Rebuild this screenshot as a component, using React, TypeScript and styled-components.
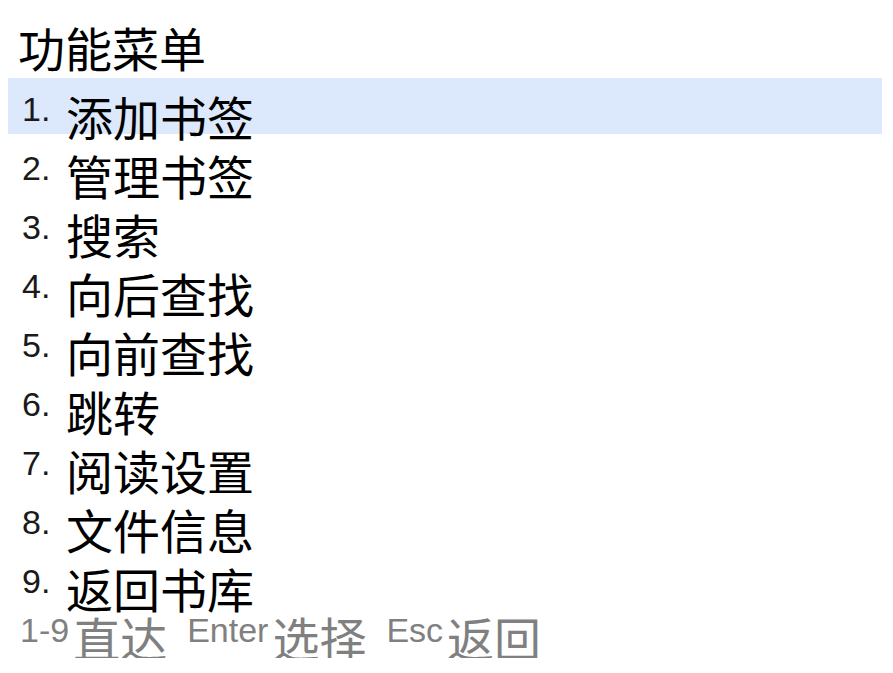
import React from "react";
import styled, { createGlobalStyle } from "styled-components";

const GlobalStyle = createGlobalStyle`
  html, body {
    margin: 0;
    padding: 0;
    background: #fff;
  }
`;

const CJK = `"Noto Sans CJK SC", "Noto Sans", sans-serif`;
const LATIN = `"Liberation Sans", "Noto Sans CJK SC", sans-serif`;

const Menu = styled.div`
  padding: 0 11px 0 8px;
  color: #000;
  font-family: ${CJK};
`;

const Title = styled.div`
  padding: 26px 0 10px 10px;
  font-size: 47px;
  line-height: 42px;
  height: 42px;
`;

const List = styled.ul`
  list-style: none;
  margin: 0;
  padding: 0;
`;

const Item = styled.li<{ $active?: boolean }>`
  display: flex;
  align-items: flex-start;
  box-sizing: border-box;
  height: 56px;
  margin-bottom: 3px;
  padding: 17px 0 0 14px;
  background: ${(p) => (p.$active ? "#dce8fc" : "transparent")};
`;

const Num = styled.span`
  width: 44px;
  flex-shrink: 0;
  font-family: ${LATIN};
  font-size: 34px;
  line-height: 29px;
  color: #1a1a1a;
`;

const Label = styled.span`
  font-size: 47px;
  line-height: 42px;
`;

const Footer = styled.div`
  display: flex;
  align-items: flex-start;
  gap: 20px;
  padding: 7px 0 0 12px;
  color: #808080;
`;

const Hint = styled.span`
  display: flex;
  align-items: flex-start;
`;

const Key = styled.span`
  font-family: ${LATIN};
  font-size: 34px;
  line-height: 29px;
  margin-right: 4px;
`;

const Action = styled.span`
  font-size: 47px;
  line-height: 42px;
`;

const items = [
  "添加书签",
  "管理书签",
  "搜索",
  "向后查找",
  "向前查找",
  "跳转",
  "阅读设置",
  "文件信息",
  "返回书库",
];

const hints = [
  { key: "1-9", action: "直达" },
  { key: "Enter", action: "选择" },
  { key: "Esc", action: "返回" },
];

export default function App() {
  const active = 0;
  return (
    <>
      <GlobalStyle />
      <Menu>
        <Title>功能菜单</Title>
        <List>
          {items.map((label, i) => (
            <Item key={label} $active={i === active}>
              <Num>{i + 1}.</Num>
              <Label>{label}</Label>
            </Item>
          ))}
        </List>
        <Footer>
          {hints.map((h) => (
            <Hint key={h.key}>
              <Key>{h.key}</Key>
              <Action>{h.action}</Action>
            </Hint>
          ))}
        </Footer>
      </Menu>
    </>
  );
}
